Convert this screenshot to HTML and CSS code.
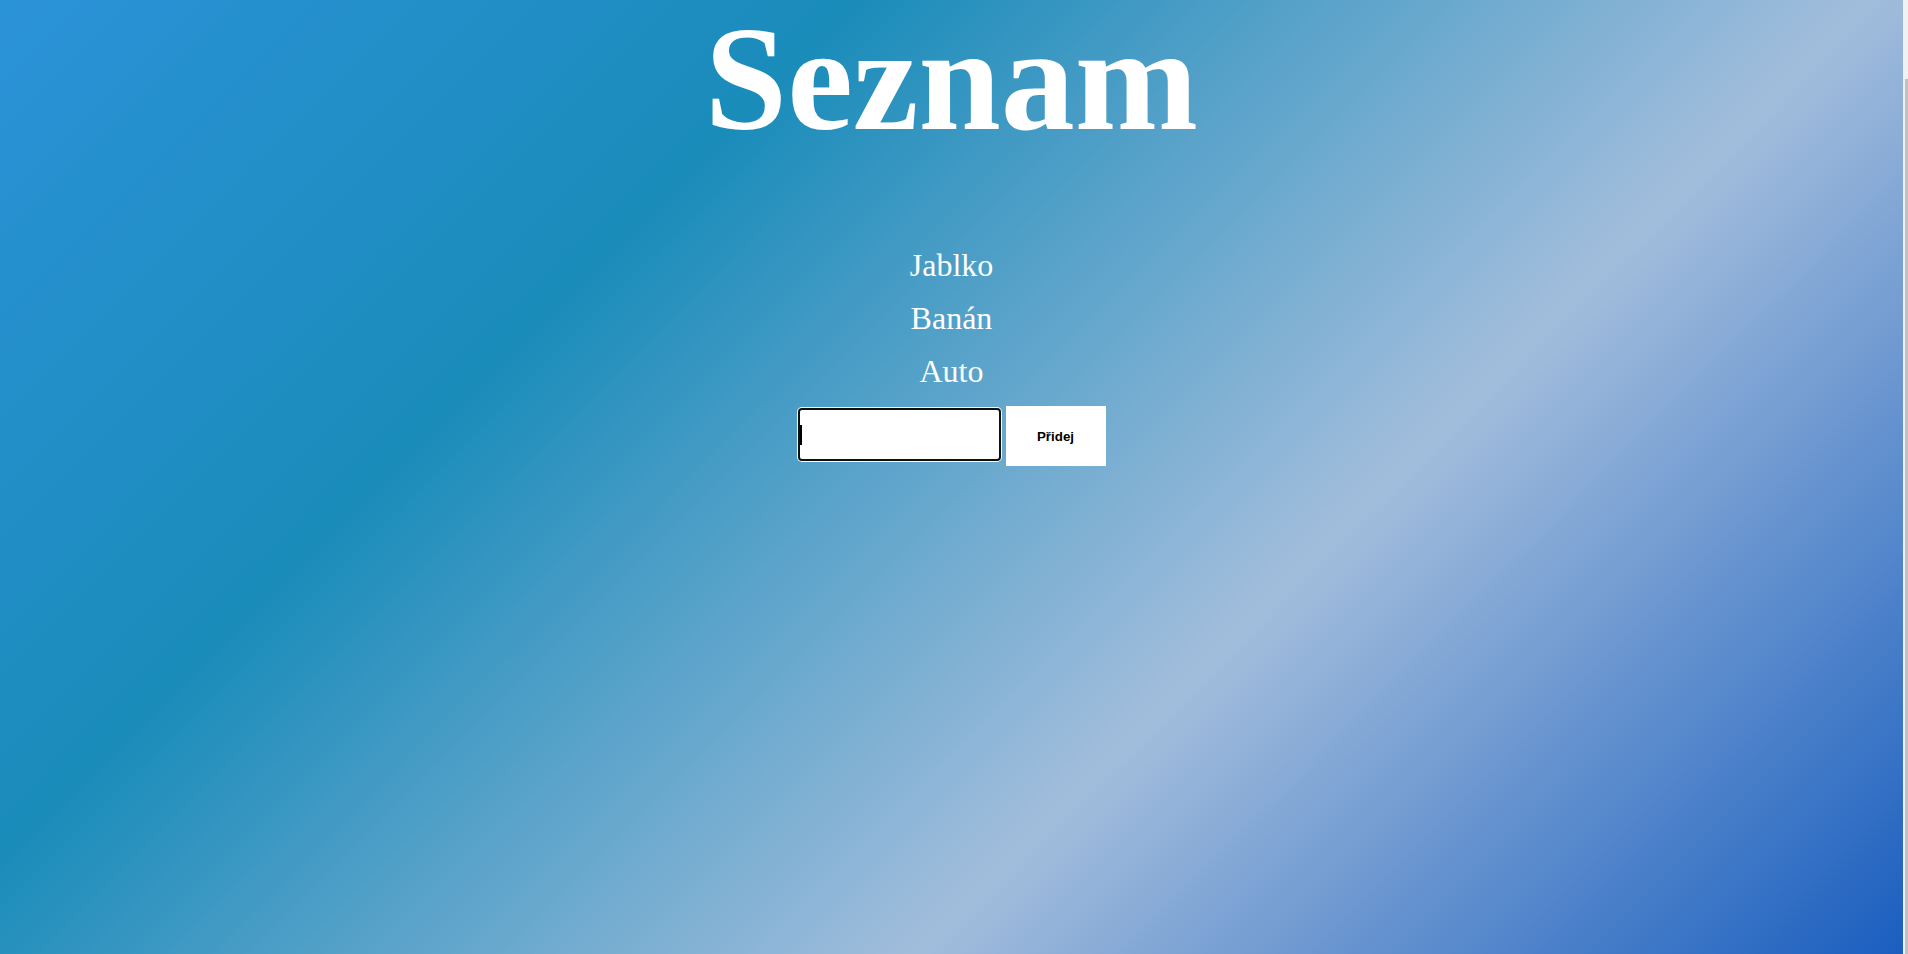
FILE: index.html
```html
<!DOCTYPE html>
<html lang="cs">
<head>
<meta charset="utf-8">
<title>Seznam</title>
<link rel="stylesheet" href="styles.css">
</head>
<body>
<div class="window">
  <main class="page">
    <h1 class="title">Seznam</h1>
    <ul class="items">
      <li class="item">Jablko</li>
      <li class="item">Banán</li>
      <li class="item">Auto</li>
    </ul>
    <form class="add-row" onsubmit="return false">
      <input class="add-input" type="text">
      <button class="add-button" type="button">Přidej</button>
    </form>
  </main>
  <div class="scrollbar"><div class="scrollbar-thumb"></div></div>
</div>
</body>
</html>
```

FILE: styles.css
```css
html, body {
  margin: 0;
  padding: 0;
  height: 100%;
  overflow: hidden;
}

.window {
  display: flex;
  height: 954px;
}

.page {
  flex: 1;
  display: flex;
  flex-direction: column;
  align-items: center;
  background: linear-gradient(135deg, #2b92d8 0%, #1a8cba 30%, #a2bddc 65.5%, #1a5ebf 100%);
  font-family: "Liberation Serif", "Times New Roman", serif;
  color: #ffffff;
}

.title {
  margin: -6px 0 0;
  font-size: 148px;
  font-weight: bold;
  line-height: normal;
  text-align: center;
}

.items {
  list-style: none;
  margin: 75px 0 0;
  padding: 0;
  text-align: center;
}

.item {
  font-size: 32px;
  line-height: 53px;
}

.add-row {
  display: flex;
  align-items: center;
  gap: 5px;
  margin-top: 8px;
}

.add-input {
  box-sizing: border-box;
  width: 203px;
  height: 53px;
  margin: 0 0 3px 0;
  padding: 0 1px;
  border: 2px solid #101010;
  border-radius: 4px;
  box-shadow: 0 0 0 1px #ffffff;
  background: linear-gradient(#000000, #000000) no-repeat 0 center / 2px 20px, #ffffff;
  font-family: "Liberation Sans", Arial, sans-serif;
  font-size: 17px;
  color: #000000;
  outline: none;
}

.add-button {
  box-sizing: border-box;
  width: 100px;
  height: 60px;
  border: none;
  background: #ffffff;
  font-family: "Liberation Sans", Arial, sans-serif;
  font-size: 13.33px;
  font-weight: bold;
  color: #000000;
  padding: 0;
}

.scrollbar {
  width: 5px;
  background: #f1f1f1;
  display: flex;
  flex-direction: column;
  align-items: flex-end;
}

.scrollbar-thumb {
  width: 3px;
  margin-top: 79px;
  flex: 1;
  background: #c1c1c1;
}
```
